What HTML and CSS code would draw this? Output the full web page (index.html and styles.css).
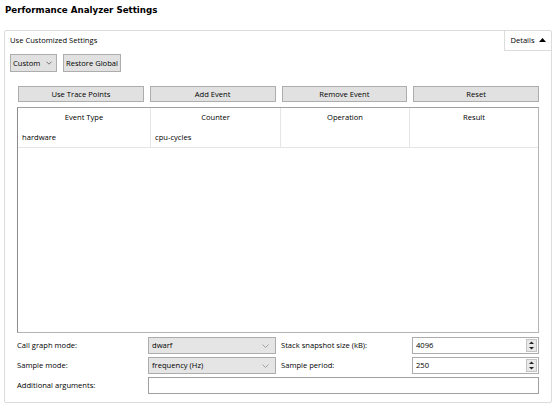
FILE: index.html
```html
<!DOCTYPE html>
<html>
<head>
<meta charset="utf-8">
<link rel="stylesheet" href="styles.css">
</head>
<body>
<div class="title">Performance Analyzer Settings</div>
<section class="group">
  <div class="group-head">
    <span class="group-label">Use Customized Settings</span>
    <div class="details">Details <svg class="tri" width="7" height="4" viewBox="0 0 7 4"><polygon points="0,4 3.5,0 7,4" fill="#000"/></svg></div>
  </div>
  <div class="mode-row">
    <div class="combo combo-custom"><span>Custom</span><svg class="chev" width="6" height="4" viewBox="0 0 6 4"><polyline points="0.5,0.7 3,3.2 5.5,0.7" fill="none" stroke="#666" stroke-width="0.9"/></svg></div>
    <div class="btn btn-restore">Restore Global</div>
  </div>
  <div class="content">
    <div class="actions">
      <div class="btn">Use Trace Points</div>
      <div class="btn">Add Event</div>
      <div class="btn">Remove Event</div>
      <div class="btn">Reset</div>
    </div>
    <div class="table">
      <div class="trow thead">
        <div class="cell c1">Event Type</div>
        <div class="cell c2">Counter</div>
        <div class="cell c3">Operation</div>
        <div class="cell c4">Result</div>
      </div>
      <div class="trow tdata">
        <div class="cell c1">hardware</div>
        <div class="cell c2">cpu-cycles</div>
        <div class="cell c3"></div>
        <div class="cell c4"></div>
      </div>
    </div>
    <div class="form">
      <div class="flabel">Call graph mode:</div>
      <div class="combo"><span>dwarf</span><svg class="chev" width="7" height="4" viewBox="0 0 7 4"><polyline points="0.5,0.5 3.5,3.5 6.5,0.5" fill="none" stroke="#999" stroke-width="0.9"/></svg></div>
      <div class="flabel flabel2">Stack snapshot size (kB):</div>
      <div class="spin"><span>4096</span><svg class="spinbtn" width="11" height="13" viewBox="0 0 11 13"><rect x="0.5" y="0.5" width="10" height="12" fill="#e8e8e8" stroke="#c4c4c4"/><polygon points="3,5 5.5,2.5 8,5" fill="#222"/><polygon points="3,8 5.5,10.5 8,8" fill="#222"/></svg></div>
      <div class="flabel">Sample mode:</div>
      <div class="combo"><span>frequency (Hz)</span><svg class="chev" width="7" height="4" viewBox="0 0 7 4"><polyline points="0.5,0.5 3.5,3.5 6.5,0.5" fill="none" stroke="#999" stroke-width="0.9"/></svg></div>
      <div class="flabel flabel2">Sample period:</div>
      <div class="spin"><span>250</span><svg class="spinbtn" width="11" height="13" viewBox="0 0 11 13"><rect x="0.5" y="0.5" width="10" height="12" fill="#e8e8e8" stroke="#c4c4c4"/><polygon points="3,5 5.5,2.5 8,5" fill="#222"/><polygon points="3,8 5.5,10.5 8,8" fill="#222"/></svg></div>
      <div class="flabel">Additional arguments:</div>
      <div class="textfield"></div>
    </div>
  </div>
</section>
</body>
</html>
```
FILE: styles.css
```css
* { box-sizing: border-box; }
html, body { margin: 0; padding: 0; background: #fff; }
body {
  width: 558px;
  height: 409px;
  overflow: hidden;
  font-family: "Open Sans", "Noto Sans", sans-serif;
  font-size: 7.6px;
  color: #000;
}
.title {
  padding: 4px 0 0 5px;
  height: 16px;
  line-height: 12px;
  font-family: "DejaVu Sans", sans-serif;
  font-weight: bold;
  font-size: 8.7px;
}
.group {
  margin: 14px 0 0 4px;
  width: 548px;
  height: 373px;
  border: 1px solid #dcdcdc;
  border-radius: 2px;
  display: flex;
  flex-direction: column;
}
.group-head {
  display: flex;
  justify-content: space-between;
  align-items: stretch;
  height: 20px;
}
.group-label {
  padding-left: 5px;
  line-height: 19px;
}
.details {
  width: 47px;
  height: 20px;
  border-left: 1px solid #dcdcdc;
  border-bottom: 1px solid #dcdcdc;
  display: flex;
  align-items: center;
  justify-content: center;
  gap: 4px;
  padding-bottom: 1px;
}
.tri { display: block; }
.mode-row {
  display: flex;
  gap: 6px;
  margin: 3px 0 0 5px;
  height: 18px;
}
.combo {
  display: flex;
  align-items: center;
  justify-content: space-between;
  background: #e5e5e5;
  border: 1px solid #acacac;
  padding: 0 6px 0 3px;
  height: 100%;
}
.combo-custom { width: 47px; background: #e1e1e1; border-color: #adadad; padding: 0 4px 0 2px; }
.chev { display: block; }
.btn {
  display: flex;
  align-items: center;
  justify-content: center;
  background: #e1e1e1;
  border: 1px solid #adadad;
  height: 100%;
  padding-bottom: 1px;
}
.btn-restore { width: 58px; }
.content {
  padding: 0 12px;
  display: flex;
  flex-direction: column;
}
.actions {
  display: grid;
  grid-template-columns: repeat(4, 1fr);
  column-gap: 6px;
  margin: 14px 0 0 1px;
  height: 16px;
}
.table {
  margin-top: 5px;
  height: 226px;
  border: 1px solid #a0a0a0;
  border-left-color: #8c8c8c;
  border-right-color: #b4b4b4;
  border-bottom-color: #b4b4b4;
}
.trow {
  display: grid;
  grid-template-columns: 133px 130px 129px 1fr;
  height: 20px;
}
.cell {
  border-right: 1px solid #e5e5e5;
  line-height: 18px;
}
.cell.c4 { border-right: none; }
.thead .cell { text-align: center; }
.tdata .cell { border-bottom: 1px solid #e5e5e5; padding-left: 4px; }
.form {
  margin-top: 4px;
  display: grid;
  grid-template-columns: 131px 128px 136px 127px;
  grid-auto-rows: 17px;
  row-gap: 3px;
}
.flabel { line-height: 16px; }
.flabel2 { padding-left: 5px; }
.spin {
  display: flex;
  align-items: center;
  justify-content: space-between;
  border: 1px solid #acacac;
  background: #fff;
  padding: 0 1px 1px 3px;
}
.combo > span { padding-bottom: 1px; }
.spinbtn { display: block; }
.textfield {
  grid-column: 2 / 5;
  border: 1px solid #a0a0a0;
  background: #fff;
}
```
